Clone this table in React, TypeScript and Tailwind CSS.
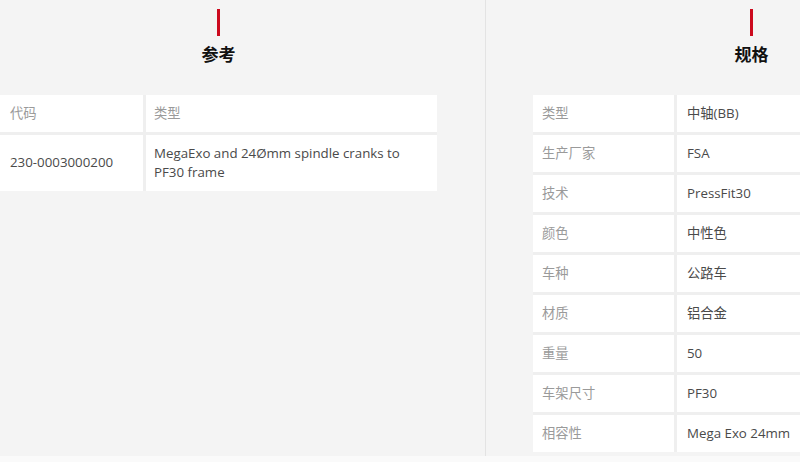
import { Fragment } from "react";

const refs = [
  { code: "230-0003000200", type: "MegaExo and 24Ømm spindle cranks to PF30 frame" },
];

const specs = [
  ["类型", "中轴(BB)"],
  ["生产厂家", "FSA"],
  ["技术", "PressFit30"],
  ["颜色", "中性色"],
  ["车种", "公路车"],
  ["材质", "铝合金"],
  ["重量", "50"],
  ["车架尺寸", "PF30"],
  ["相容性", "Mega Exo 24mm"],
];

const font = "font-['Open_Sans','Noto_Sans_CJK_SC',sans-serif]";

function SectionTitle({ title }: { title: string }) {
  return (
    <div className="flex flex-col items-center pt-[9px]">
      <div className="w-[2.5px] h-[27px] bg-[#cc0a1e]" />
      <h2 className="mt-[7px] text-[17px] leading-[24px] font-bold text-[#111]">{title}</h2>
    </div>
  );
}

export default function App() {
  return (
    <div className={`w-[800px] h-[462px] overflow-hidden bg-[#f4f4f4] flex flex-col ${font}`}>
      <div className="h-[456px] flex shrink-0">
        {/* Reference column */}
        <div className="w-[486px] shrink-0 border-r border-[#e3e3e3]">
          <div className="w-[437px]">
            <SectionTitle title="参考" />
            <div className="mt-[28px] grid grid-cols-[143px_1fr] gap-[3px] bg-[#efefef] text-[13.3px]">
              <div className="h-[37px] bg-white pl-[10px] flex items-center text-[#9a9a9a]">代码</div>
              <div className="h-[37px] bg-white pl-[8px] flex items-center text-[#9a9a9a]">类型</div>
              {refs.map((r) => (
                <Fragment key={r.code}>
                  <div className="bg-white pl-[10px] flex items-center text-[#4a4a4a]">{r.code}</div>
                  <div className="bg-white pl-[8px] pr-[36px] py-[9px] leading-[19px] text-[#4a4a4a]">{r.type}</div>
                </Fragment>
              ))}
            </div>
          </div>
        </div>

        {/* Specs column */}
        <div className="pl-[47px] shrink-0">
          <div className="w-[437px]">
            <SectionTitle title="规格" />
            <div className="mt-[28px] grid grid-cols-[141px_1fr] gap-[3px] bg-[#efefef] text-[13.3px]">
              {specs.map(([k, v]) => (
                <Fragment key={k}>
                  <div className="h-[37px] bg-white pl-[9px] flex items-center text-[#9a9a9a]">{k}</div>
                  <div className="h-[37px] bg-white pl-[10px] flex items-center text-[#4a4a4a]">{v}</div>
                </Fragment>
              ))}
            </div>
          </div>
        </div>
      </div>
      <div className="flex-1 bg-[#fafafa]" />
    </div>
  );
}
